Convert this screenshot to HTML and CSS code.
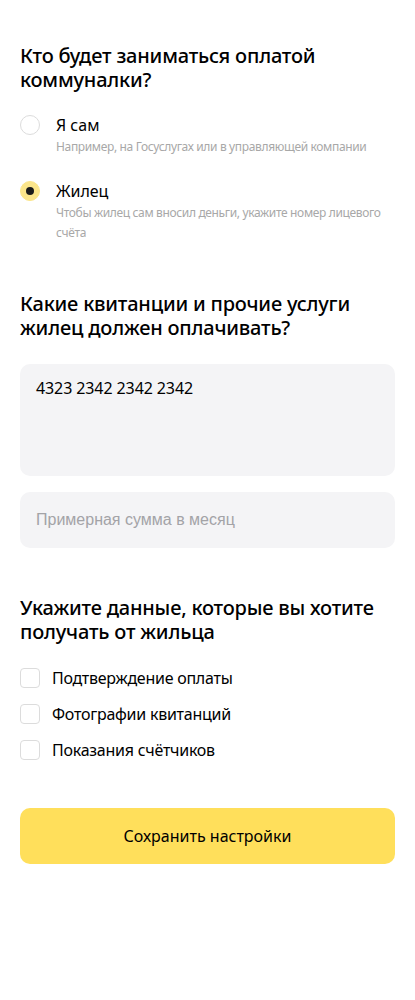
FILE: index.html
```html
<!DOCTYPE html>
<html lang="ru">
<head>
<meta charset="utf-8">
<link rel="stylesheet" href="styles.css">
</head>
<body>
<main class="page">
  <h2 class="title t1">Кто будет заниматься оплатой коммуналки?</h2>
  <div class="radios">
    <div class="radio-row">
      <span class="radio"></span>
      <div class="radio-text">
        <div class="radio-label">Я сам</div>
        <div class="radio-desc">Например, на Госуслугах или в управляющей компании</div>
      </div>
    </div>
    <div class="radio-row">
      <span class="radio checked"><span class="dot"></span></span>
      <div class="radio-text">
        <div class="radio-label">Жилец</div>
        <div class="radio-desc">Чтобы жилец сам вносил деньги, укажите номер лицевого счёта</div>
      </div>
    </div>
  </div>

  <h2 class="title t2">Какие квитанции и прочие услуги жилец должен оплачивать?</h2>
  <div class="field area">4323 2342 2342 2342</div>
  <div class="field input"><span class="placeholder">Примерная сумма в месяц</span></div>

  <h2 class="title t3">Укажите данные, которые вы хотите получать от жильца</h2>
  <div class="checks">
    <div class="check-row"><span class="box"></span><span class="check-label">Подтверждение оплаты</span></div>
    <div class="check-row"><span class="box"></span><span class="check-label">Фотографии квитанций</span></div>
    <div class="check-row"><span class="box"></span><span class="check-label">Показания счётчиков</span></div>
  </div>

  <button class="save">Сохранить настройки</button>
</main>
</body>
</html>
```

FILE: styles.css
```css
* { box-sizing: border-box; }
html, body { margin: 0; padding: 0; background: #fff; }
body {
  font-family: "Noto Sans", Roboto, "Liberation Sans", sans-serif;
  color: #000;
}
.page {
  padding: 44px 20px 40px;
  display: flex;
  flex-direction: column;
}
.title {
  margin: 0;
  font-size: 20px;
  line-height: 24px;
  font-weight: 500;
  letter-spacing: -0.2px;
}
.radios {
  margin-top: 23px;
  display: flex;
  flex-direction: column;
  gap: 24px;
}
.radio-row {
  display: flex;
  gap: 16px;
  align-items: flex-start;
}
.radio {
  width: 20px;
  height: 20px;
  border-radius: 50%;
  border: 1px solid #dcdcdc;
  flex: none;
  display: flex;
  align-items: center;
  justify-content: center;
}
.radio.checked {
  background: #fbe58a;
  border-color: #fbe58a;
}
.dot {
  width: 8px;
  height: 8px;
  border-radius: 50%;
  background: #1a1a1a;
}
.radio-label {
  font-size: 16px;
  line-height: 20px;
}
.radio-desc {
  margin-top: 2px;
  font-size: 12px;
  line-height: 20px;
  color: #a8a8a8;
  letter-spacing: -0.35px;
}
.t2 { margin-top: 49px; }
.field {
  background: #f4f4f6;
  border-radius: 10px;
  padding: 0 16px;
  font-size: 16px;
}
.area {
  margin-top: 24px;
  height: 112px;
  padding-top: 14px;
  line-height: 20px;
  letter-spacing: -0.1px;
}
.input {
  margin-top: 16px;
  height: 56px;
  display: flex;
  align-items: center;
}
.placeholder {
  font-family: "Liberation Sans", Arial, sans-serif;
  color: #a3a3a7;
  font-size: 16px;
}
.t3 { margin-top: 48px; }
.checks {
  margin-top: 24px;
  display: flex;
  flex-direction: column;
  gap: 16px;
}
.check-row {
  display: flex;
  align-items: center;
  gap: 12px;
  height: 20px;
}
.box {
  width: 20px;
  height: 20px;
  border: 1px solid #dcdcdc;
  border-radius: 4px;
  flex: none;
}
.check-label {
  font-size: 16px;
  line-height: 20px;
  letter-spacing: -0.25px;
}
.save {
  margin-top: 48px;
  height: 56px;
  width: 100%;
  border: none;
  border-radius: 10px;
  background: #ffdf5b;
  font-family: inherit;
  font-size: 16px;
  color: #000;
}
```
